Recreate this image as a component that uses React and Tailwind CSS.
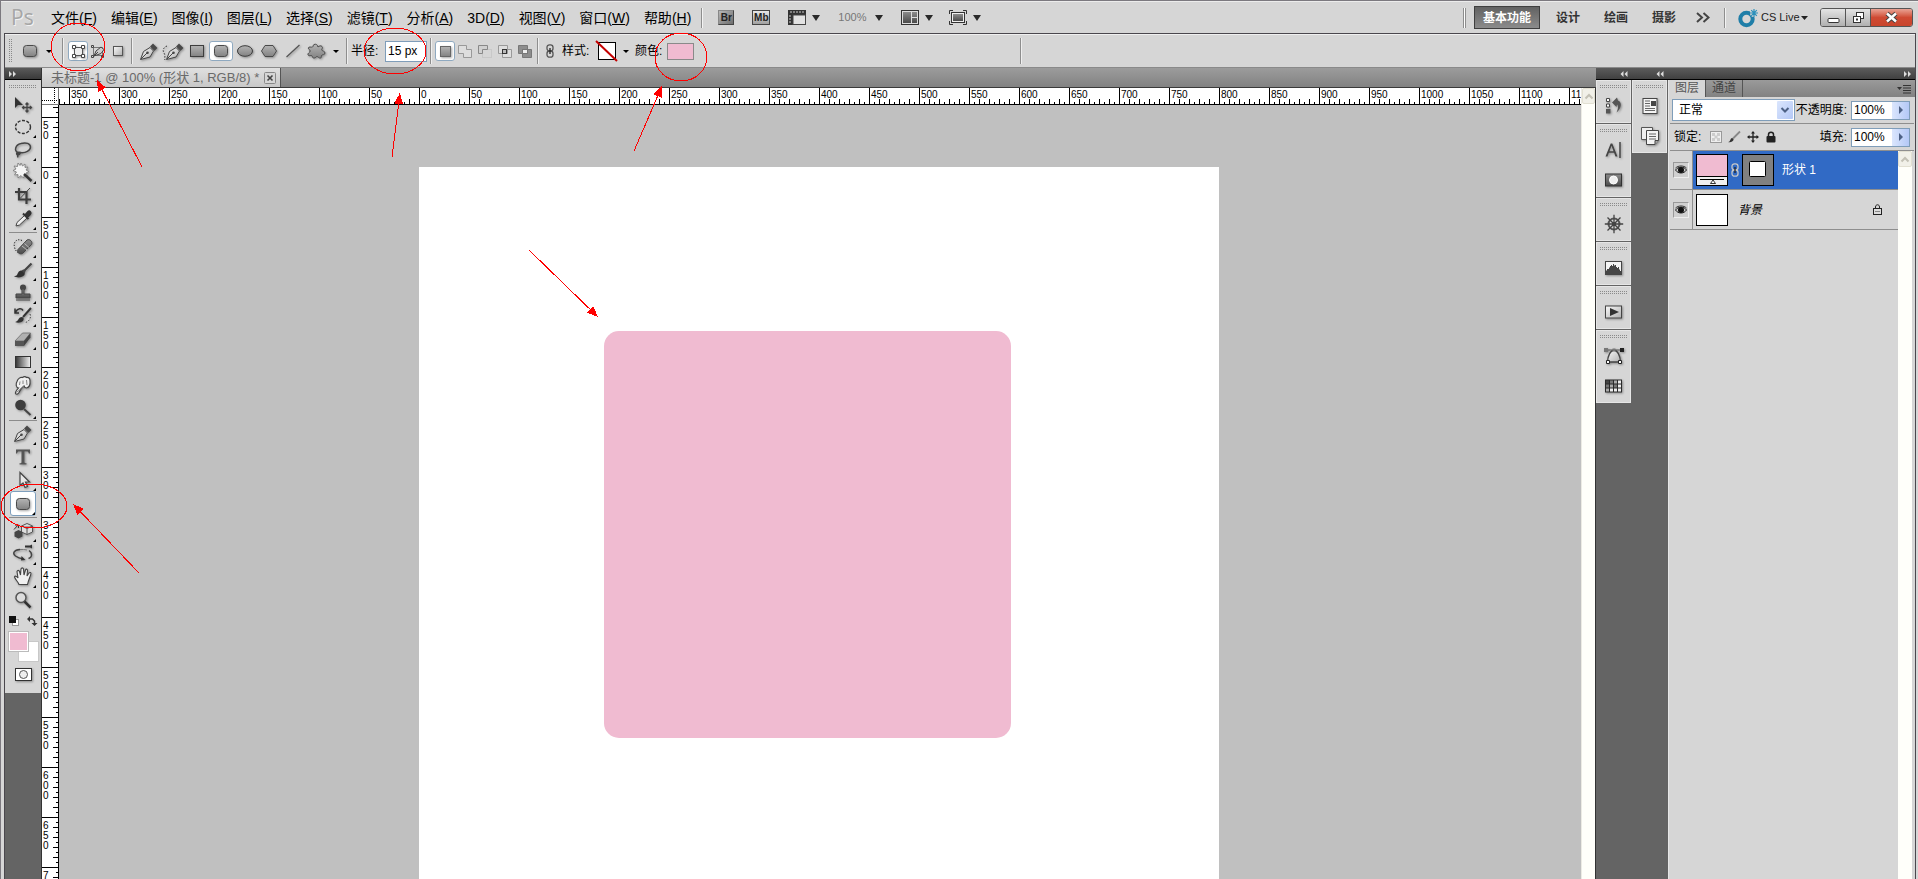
import React, { useEffect, useState } from "react";

const INK = "#4a4a4a";

function Defs() {
  return (
    <svg className="absolute h-0 w-0" aria-hidden="true">
      <defs>
        <linearGradient id="metal" x1="0" y1="0" x2="0" y2="1">
          <stop offset="0" stopColor="#b4b4b4" />
          <stop offset="1" stopColor="#828282" />
        </linearGradient>
        <linearGradient id="dark" x1="0" y1="0" x2="0" y2="1">
          <stop offset="0" stopColor="#8c8c8c" />
          <stop offset="1" stopColor="#4a4a4a" />
        </linearGradient>
        <linearGradient id="pale" x1="0" y1="0" x2="1" y2="1">
          <stop offset="0" stopColor="#fafafa" />
          <stop offset="1" stopColor="#b0b0b0" />
        </linearGradient>
        <linearGradient id="fade" x1="0" y1="0" x2="1" y2="0">
          <stop offset="0" stopColor="#333" />
          <stop offset="1" stopColor="#f4f4f4" />
        </linearGradient>
        <pattern id="dots" width="2" height="2" patternUnits="userSpaceOnUse">
          <path d="M0 0h1v1H0z" fill="#8a8a8a" />
        </pattern>
        <filter id="soft" x="-30%" y="-30%" width="170%" height="170%">
          <feDropShadow dx="1" dy="1" stdDeviation="1" floodColor="#000" floodOpacity="0.35" />
        </filter>
      </defs>
    </svg>
  );
}

function Svg({ w = 20, h = 20, soft, children }) {
  return (
    <svg width={w} height={h} viewBox={`0 0 ${w} ${h}`} fill="none" className="block shrink-0 overflow-visible" aria-hidden="true">
      {soft ? <g filter="url(#soft)">{children}</g> : children}
    </svg>
  );
}

const Caret = ({ big }) =>
  big ? (
    <Svg w={8} h={6}><path d="M0 0h8L4 6z" fill="#2a2a2a" /></Svg>
  ) : (
    <Svg w={6} h={3}><path d="M0 0h6L3 3z" fill="#000" /></Svg>
  );

/* ---------- shared glyphs ---------- */
const RoundRect = () => (
  <Svg w={16} h={14} soft><rect x="1.5" y="1.5" width="13" height="11" rx="3" fill="url(#metal)" stroke={INK} /></Svg>
);
const PenNib = ({ fill = "url(#pale)" }) => (
  <g>
    <path d="M1.5 17.5 4.5 9.5 11 5.5 14.5 9 11 15z" fill={fill} stroke="#444" />
    <path d="M2 17 8 11" stroke="#444" />
    <circle cx="8.5" cy="10.8" r="1.3" fill="#444" />
    <path d="M11 4.5 14 1.5 18.5 6 15.5 9z" fill="#4a4a4a" />
  </g>
);
const Pen = () => <Svg w={20} h={19} soft><PenNib /></Svg>;

/* ---------- toolbox ---------- */
const tools = {
  move: <Svg soft><path d="M2 3v11l3-3h5z" fill="#333" /><path d="M14 9v9M9.500 13.500h9M12.500 10.500 14 9l1.500 1.500M12.500 16.500 14 18l1.500-1.500M11 12l-1.500 1.500L11 15M17 12l1.500 1.500L17 15" stroke="#444" strokeWidth="1.300" /></Svg>,
  marquee: <Svg><ellipse cx="10" cy="10" rx="7.500" ry="6.500" stroke="#333" strokeWidth="1.400" strokeDasharray="3 1.500" /></Svg>,
  lasso: <Svg soft><path d="M5 12.500C1 11 2 5 8 3.500c5-1.500 9.500 0 9.500 3.500s-5 6.500-10 5.500c-3-.6-4.500.5-3.500 2s4-1 3-2c-1.500-.5-3 3-2 5" stroke="#444" strokeWidth="1.500" /></Svg>,
  wand: <Svg soft><path d="m8 0 1.500 3L12 1l0 3.500L15 4l-2 3 3 1.500-3 1.500 1.500 3-3-1L10.500 15 8 12.500 5 15l0-3.500L1.500 12l2-3L0 7.500 3 6 1 3l3.500.5L5 0l2 2.500z" fill="#f4f4f4" stroke="#777" strokeWidth=".8" /><path d="m11 11 7.500 7" stroke="#333" strokeWidth="2.500" /></Svg>,
  crop: <Svg soft><path d="M6 2v11.500h12M2 6h11.500v12" stroke="#3c3c3c" strokeWidth="2.200" /><path d="M7 12.500 17 2" stroke="#444" /></Svg>,
  dropper: <Svg soft><path d="m3 17 1-3.500 7.500-7 2.500 2.500-7.500 7z" fill="#eee" stroke="#444" /><path d="m10 4.500 5.500 5.500M12.500 6l2.500-3c1.500-1.500 3.500.5 2.200 2.200L14.500 8z" stroke="#333" strokeWidth="2" fill="#333" /></Svg>,
  heal: <Svg soft><path d="M9 3.500C4 1 0 5 1.500 10c.5 3 2 4.500 4 6" stroke="#222" strokeDasharray="1.200 1.500" /><path d="m5 12.500 9-9.500c3-1.500 6 2 4.500 4.500l-9 9c-3 1.500-6-1.500-4.500-4z" fill="url(#dark)" stroke="#444" /><path d="m9 9 5 4M11.500 6.500l4.500 4" stroke="#ccc" strokeWidth=".8" /></Svg>,
  brush: <Svg soft><path d="M1 16c3 .5 3-1.500 4.500-4 1.500-2 4-2 5.500-.5s1 4-1.500 5S3.500 18 1 16z" fill="#333" /><path d="m11 11 7.500-7.500M9.500 10l2.500 2.500" stroke="#444" strokeWidth="2.200" /></Svg>,
  stamp: <Svg soft><circle cx="10" cy="4.500" r="3" fill="#444" /><path d="M9 6h2v5h6v4H3v-4h6z" fill="url(#dark)" stroke="#444" /><path d="M3 17h14" stroke="#444" /></Svg>,
  history: <Svg soft><path d="M2.500 6C5 2 8.500 2 10 4.500M2 2.500V7h4" stroke="#333" strokeWidth="1.500" /><path d="M2 16c3-.5 3-3 5-4.500s4.500 0 3.500 2.500S5 17.500 2 16z" fill="#333" /><path d="m10 11 8-9" stroke="#333" strokeWidth="2" /><path d="M17 8c1.500 4-1 7.500-4.500 8.500" stroke="#444" strokeDasharray="1.500 1.500" /></Svg>,
  eraser: <Svg soft><path d="M2 12 9.500 4h8L11 12z" fill="#b0b0b0" stroke="#666" strokeWidth=".7" /><path d="M2 12h9v5H2z" fill="#555" /><path d="m11 12 6.500-8v4.500L11 17z" fill="#444" /></Svg>,
  gradient: <Svg><rect x="2.500" y="4.500" width="15" height="11" fill="url(#fade)" stroke="#333" /></Svg>,
  smudge: <Svg soft><path d="M2.500 18.500c-.5-1.500 1-3 3-5.500C3 12.500 2.500 9 4 6.500 5 3.500 7.500 2 9.500 2.500c1.500-1 3-1 4 0 2-.5 3.500 1 3.500 3 .5 4-1 7-3.500 7.500-1.500 0-2.200-1-2.500-2-2 1.500-4 4-5 6.500-1 1.800-2.800 2.200-3.500 1z" fill="#f0f0f0" stroke="#444" strokeWidth="1.200" /><path d="M7 6.500 6.500 10M10 5.500v3.500M13.500 5l.5 5M3.500 17.500 11 11" stroke="#777" strokeWidth=".9" /></Svg>,
  dodge: <Svg soft><circle cx="7.500" cy="7" r="5.300" fill="#3c3c3c" /><path d="m11 11 6.500 6" stroke="#444" strokeWidth="2" /></Svg>,
  pen: <Pen />,
  type: <Svg soft><path d="M3 2.500h14v4h-1.200c-.3-1.500-.8-2-2-2H11.500V15c0 1 .5 1.300 2 1.300v1.200h-7v-1.200c1.500 0 2-.3 2-1.300V4.500H6.200c-1.200 0-1.700.5-2 2H3z" fill="#555" /></Svg>,
  select: <Svg soft><path d="M7 2.500v13l3-2.500 2 4.500 2.500-1-2-4.500h4z" fill="#e8e8e8" stroke="#444" strokeWidth="1.200" /></Svg>,
  shape: <RoundRect />,
  object3d: <Svg soft><path d="m14 2.500 5.500 2.500v6L14 13.500 8.500 11V5zM8.500 5l5.500 2.500L19.500 5M14 7.500v6" fill="#ddd" stroke="#555" /><path d="m5.500 9 4 2v4.500l-4 2-4-2V11z" fill="#444" /><path d="M1 8.500 5 4M2 4h3.500v3" stroke="#333" /></Svg>,
  camera3d: <Svg soft><path d="M16 6.500c4 3 3 7-.5 8M7 5.500C1 6-1 9 2.500 12c2 1.500 5 2.500 8 3" stroke="#444" strokeWidth="1.500" /><path d="m8 16.500 4.500-.5-4-4zM12 1.500h5l2-1v4l-2-1h-5z" fill="#333" /><path d="M7 5.500c2-.2 5 0 7 .5" stroke="#777" /></Svg>,
  hand: <Svg soft><path d="M6 17.500c-1-3-3.500-4.500-4.500-7.500.5-1.500 2-1 3.500 1L4 4.500c.5-1.500 2-1.500 2.500 0L7.500 8 8 2c.5-1.500 2-1.500 2.500 0l.5 6 1.500-5c.5-1.500 2-1 2 .5L14 9l2-3c1-1 2-.5 2 .7-1 4-2.500 6-3.500 10.800z" fill="#f0f0f0" stroke="#444" strokeWidth="1.100" /></Svg>,
  zoom: <Svg soft><circle cx="8" cy="7.500" r="5" fill="#ddd" stroke="#555" strokeWidth="1.500" /><path d="m11.500 11.500 6 6" stroke="#333" strokeWidth="2.500" /></Svg>,
};

const toolGroups = [
  [["move", "移动"], ["marquee", "选框"], ["lasso", "套索"], ["wand", "魔棒"], ["crop", "裁剪"], ["dropper", "吸管"]],
  [["heal", "修复"], ["brush", "画笔"], ["stamp", "图章"], ["history", "历史画笔"], ["eraser", "橡皮擦"], ["gradient", "渐变"], ["smudge", "涂抹"], ["dodge", "减淡"]],
  [["pen", "钢笔"], ["type", "文字"], ["select", "路径选择"], ["shape", "圆角矩形"]],
  [["object3d", "3D 对象"], ["camera3d", "3D 相机"], ["hand", "抓手"], ["zoom", "缩放"]],
];

const DotGrip = () => <Svg w={28} h={3}><path d="M0 0h28v3H0z" fill="url(#dots)" /></Svg>;

function Toolbox() {
  return (
    <aside className="flex w-9 shrink-0 flex-col bg-[#646464]" aria-label="工具">
      <div className="flex h-3 shrink-0 items-center border-b border-black bg-gradient-to-b from-[#5a5a5a] to-[#3a3a3a] pl-1">
        <Svg w={8} h={6}><path d="M0 0v6l3-3zM4 0v6l3-3z" fill="#ddd" /></Svg>
      </div>
      <div className="flex flex-col items-center bg-[#d6d6d6] pb-3">
        <div className="flex h-3 shrink-0 items-center"><DotGrip /></div>
        {toolGroups.map((group, g) => (
          <div key={g} className="flex flex-col items-center">
            {g > 0 && <span className={`block h-px w-7 bg-[#8c8c8c] ${g === 1 ? "my-[2px]" : "my-px"}`} />}
            {group.map(([id, label]) => (
              <button key={id} type="button" aria-label={label} className={`relative flex w-[26px] items-center justify-center ${id === "shape" ? "h-[25px] rounded-[3px] border border-[#7e9fbd] bg-white" : "h-[23px]"}`}>
                {tools[id]}
                {id !== "move" && id !== "zoom" && (
                  <span className="absolute right-0 bottom-0"><Svg w={3} h={3}><path d="M3 0v3H0z" fill="#000" /></Svg></span>
                )}
              </button>
            ))}
          </div>
        ))}
        <div className="flex h-5 w-full items-center justify-between px-1">
          <button type="button" aria-label="默认颜色"><Svg w={10} h={10}><rect x="3.500" y="3.500" width="6" height="6" fill="#fff" stroke="#999" /><path d="M0 0h7v7H0z" fill="#111" /></Svg></button>
          <button type="button" aria-label="切换颜色"><Svg w={10} h={10}><path d="M2 3h3.500L7.500 5v3" stroke="#333" strokeWidth="1.500" /><path d="M3 0v6L0 3zM4.500 7h6l-3 3z" fill="#333" /></Svg></button>
        </div>
        <div className="relative h-[31px] w-[31px]">
          <button type="button" aria-label="背景色" className="absolute right-0 bottom-0 h-[21px] w-[21px] border border-[#c8c8c8] bg-white" />
          <button type="button" aria-label="前景色" className="absolute top-0 left-0 h-[21px] w-[21px] border border-[#bbb] bg-[#f0bbd1] shadow-[inset_0_0_0_1px_#fff]" />
        </div>
        <button type="button" aria-label="快速蒙版" className="mt-[6px]">
          <Svg w={17} h={13} soft><rect x=".5" y=".5" width="16" height="12" fill="#fff" stroke="#333" /><circle cx="8.500" cy="6.500" r="4" fill="#eee" stroke="#555" /></Svg>
        </button>
      </div>
    </aside>
  );
}

/* ---------- menu bar ---------- */
const menus = [["文件", "F"], ["编辑", "E"], ["图像", "I"], ["图层", "L"], ["选择", "S"], ["滤镜", "T"], ["分析", "A"], ["3D", "D"], ["视图", "V"], ["窗口", "W"], ["帮助", "H"]];

function WinButton({ label, className, children }) {
  return (
    <button type="button" aria-label={label} className={`flex h-[17px] items-center justify-center ${className}`}>
      {children}
    </button>
  );
}

function MenuBar() {
  return (
    <header className="flex h-8 shrink-0 items-center border-t border-[#ececec] bg-[#d6d6d6] pr-[5px] pl-[10px]">
      <span className="w-10 shrink-0 font-['Open_Sans','Liberation_Sans',sans-serif] text-[21px] leading-none text-[#a6a6a6] [text-shadow:1px_1px_0_#f2f2f2]">Ps</span>
      <nav className="flex shrink-0 gap-[14px]">
        {menus.map(([name, key]) => (
          <button key={key} type="button" className="text-[14px] leading-5 whitespace-nowrap">
            {name}(<span className="underline">{key}</span>)
          </button>
        ))}
      </nav>
      <span className="ml-[10px] h-5 w-[2px] shrink-0 border-l border-[#8e8e8e] bg-white/70" />
      <div className="ml-[15px] flex shrink-0 items-center">
        <button type="button" className="flex h-[15px] w-4 items-center justify-center border border-t-[#888] border-l-[#888] border-[#444] bg-gradient-to-br from-[#b8b8b8] to-[#6e6e6e] text-[10px] leading-none font-bold text-[#222]">Br</button>
        <button type="button" className="ml-[18px] flex h-[15px] w-[18px] items-center justify-center border border-[#444] bg-gradient-to-b from-[#e8e8e8] to-[#a0a0a0] text-[10px] leading-none font-bold text-[#222]">Mb</button>
        <button type="button" aria-label="查看额外内容" className="ml-[18px] flex w-8 items-center justify-between">
          <Svg w={18} h={15}><path d="M0 0h18v5H5v10H0z" fill="#333" /><rect x="5" y="5" width="12.500" height="9.500" fill="#e2e2e2" stroke="#444" /><path d="M3 1v2M6 1v2M9 1v2M12 1v2M15 1v2M1 6h2M1 9h2M1 12h2" stroke="#ccc" /></Svg>
          <Caret big />
        </button>
        <button type="button" aria-label="缩放级别" className="ml-[18px] flex w-[45px] items-center justify-between text-[11px] text-[#777]">
          100%<Caret big />
        </button>
        <button type="button" aria-label="排列文档" className="ml-[18px] flex w-8 items-center justify-between">
          <Svg w={18} h={15}><rect x=".5" y=".5" width="17" height="14" fill="#ddd" stroke="#333" /><path d="M2 2h8v11H2zM11 2h5v5h-5zM11 8h5v5h-5z" fill="url(#dark)" /></Svg>
          <Caret big />
        </button>
        <button type="button" aria-label="屏幕模式" className="ml-4 flex w-8 items-center justify-between">
          <Svg w={18} h={15}><path d="M.5 4V.5H4M14 .5h3.500V4M17.500 11v3.500H14M4 14.500H.5V11" stroke="#333" /><rect x="2.500" y="2.500" width="13" height="10" fill="#eee" stroke="#333" /><path d="M4 4h10v7H4z" fill="url(#dark)" /></Svg>
          <Caret big />
        </button>
      </div>
      <div className="ml-auto flex shrink-0 items-center text-[12px] font-bold">
        <span className="mr-2 h-5 w-[3px] border-x border-[#8e8e8e] bg-white" />
        <button type="button" className="h-[23px] w-[66px] border border-[#3f3f3f] bg-gradient-to-b from-[#626262] to-[#8c8c8c] text-white">基本功能</button>
        <button type="button" className="ml-4 text-[#333]">设计</button>
        <button type="button" className="ml-6 text-[#333]">绘画</button>
        <button type="button" className="ml-6 text-[#333]">摄影</button>
        <button type="button" aria-label="更多工作区" className="ml-5"><Svg w={14} h={11}><path d="m1 1 5 4.500-5 4.500M7.500 1l5 4.500-5 4.500" stroke="#444" strokeWidth="2" /></Svg></button>
        <span className="ml-[14px] h-5 w-[2px] border-l border-[#8e8e8e] bg-white/70" />
        <button type="button" className="ml-3 flex items-center text-[11px] font-normal text-[#222]">
          <Svg w={20} h={18}><circle cx="8.500" cy="10" r="6.200" stroke="#1f7ea8" strokeWidth="4" /><circle cx="16" cy="4" r="4" fill="#d6d6d6" /><path d="M16 0v8M12 4h8M13.200 1.200l5.600 5.600M18.800 1.200l-5.600 5.600" stroke="#2b90bb" strokeWidth="1.200" /></Svg>
          <span className="ml-[3px] w-10 text-left whitespace-nowrap">CS Live</span>
          <Svg w={7} h={4}><path d="M0 0h7L3.500 4z" fill="#222" /></Svg>
        </button>
        <div className="ml-3 flex overflow-hidden rounded-[3px] border border-[#555]">
          <WinButton label="最小化" className="w-[25px] border-r border-[#555] bg-gradient-to-b from-[#e4e4e4] to-[#b0b0b0]">
            <Svg w={13} h={13}><rect x="1" y="7.500" width="11" height="4" rx="1" fill="#fff" stroke="#333" /></Svg>
          </WinButton>
          <WinButton label="还原" className="w-[25px] border-r border-[#555] bg-gradient-to-b from-[#e4e4e4] to-[#b0b0b0]">
            <Svg w={13} h={13}><rect x="4.500" y="1.500" width="7" height="6" fill="#fff" stroke="#333" /><rect x="1.500" y="5.500" width="7" height="6" fill="#fff" stroke="#333" /><path d="M4 8.500h2" stroke="#333" strokeWidth="2" /></Svg>
          </WinButton>
          <WinButton label="关闭" className="w-[41px] bg-gradient-to-b from-[#e8a294] via-[#cf4a33] to-[#c8452c]">
            <Svg w={13} h={11}><path d="m2 1.500 9 8M11 1.500l-9 8" stroke="#444" strokeWidth="4.500" /><path d="m2 1.500 9 8M11 1.500l-9 8" stroke="#fff" strokeWidth="2.500" /></Svg>
          </WinButton>
        </div>
      </div>
    </header>
  );
}

/* ---------- options bar ---------- */
const Sep = ({ className = "" }) => <span className={`h-[26px] w-[2px] shrink-0 border-l border-[#8e8e8e] bg-white/60 ${className}`} />;

function Slot({ label, wide, on, children }) {
  return (
    <button type="button" aria-label={label} className={`flex h-5 shrink-0 items-center justify-center ${wide ? "w-6" : "w-5"} ${on ? "rounded-[3px] border border-[#8fa9c0] bg-white" : ""}`}>
      {children}
    </button>
  );
}

const shapeSlots = [
  ["钢笔", <Pen />],
  ["自由钢笔", <Svg w={22} h={19} soft><g transform="translate(3 0)"><PenNib /></g><path d="M5 4C2 5 0 8 2 11s0 5 1 7" stroke="#333" strokeDasharray="1.500 1.500" /></Svg>],
  ["矩形", <Svg w={16} h={14} soft><rect x="1.500" y="1.500" width="13" height="11" fill="url(#metal)" stroke="#3c3c3c" /></Svg>],
  ["圆角矩形", <RoundRect />],
  ["椭圆", <Svg w={18} h={14} soft><ellipse cx="9" cy="7" rx="7.500" ry="5.300" fill="url(#metal)" stroke="#3c3c3c" /></Svg>],
  ["多边形", <Svg w={18} h={14} soft><path d="M5 1.500h8L16.500 7 13 12.500H5L1.500 7z" fill="url(#metal)" stroke={INK} /></Svg>],
  ["直线", <Svg w={16} h={14} soft><path d="M1.500 13 14.500 1" stroke="#555" strokeWidth="1.300" /></Svg>],
  ["自定形状", <Svg w={20} h={16} soft><path d="M7 1.500c2-.8 3.500.2 4 2.500 1-1 3-1.800 4-.5 1.200 1.500-.5 2.500-.3 3.500.3 1.200 3.300.8 3.300 3s-3 1.500-3.500 2.500.5 2-1 2.500-2.500-1.500-3.500-1.500-1.500 2-3.500 1.500c-1.500-.4-1-2-1.800-2.400-1-.4-3 1-3.700-.8-.6-1.600 2-2.300 2.200-3.800C3.300 6.500 1 6.500 1.300 4.900c.4-1.600 3.200-.4 4.200-.9S5.800 2 7 1.500z" fill="url(#metal)" stroke={INK} /></Svg>],
];

const combineSlots = [
  ["新建形状图层", <Svg w={12} h={12} soft><rect x="1.500" y="1.500" width="10" height="10" fill="url(#metal)" stroke="#666" /></Svg>],
  ["添加到形状区域", <Svg w={14} h={13}><path d="M.5 .5h8v4h5v8h-8v-4h-5z" fill="#dedede" stroke="#999" /></Svg>],
  ["从形状区域减去", <Svg w={14} h={13}><path d="M4.500 4.500h9v8h-9z" stroke="#bbb" strokeDasharray="1 1" /><path d="M.5 .5h9v4h-5v4h-4z" fill="#d0d0d0" stroke="#888" /></Svg>],
  ["交叉形状区域", <Svg w={14} h={13}><path d="M.5 .5h9v8h-9zM4.500 4.500h9v8h-9z" fill="#dedede" stroke="#999" /><rect x="4.500" y="4.500" width="4" height="4" fill="#bbb" stroke="#333" /></Svg>],
  ["重叠形状区域除外", <Svg w={14} h={13}><path d="M.5 .5h9v8h-9zM4.500 4.500h9v8h-9z" fill="#8d8d8d" stroke="#777" /><rect x="4.500" y="4.500" width="5" height="4" fill="#eee" stroke="#777" /></Svg>],
];

const ChainGlyph = ({ color = "#555", bar = "#222" }) => (
  <Svg w={8} h={14}><rect x="1" y=".8" width="6" height="6.200" rx="2.500" stroke={color} strokeWidth="1.300" /><rect x="1" y="7" width="6" height="6.200" rx="2.500" stroke={color} strokeWidth="1.300" /><path d="M4 4v6" stroke={bar} strokeWidth="1.300" /></Svg>
);

function OptionsBar() {
  return (
    <div className="flex h-[34px] shrink-0 items-center border-t border-b border-t-[#f0f0f0] border-b-[#8a8a8a] bg-[#d6d6d6] pl-1 text-[12px]">
      <Svg w={3} h={24}><path d="M0 0h3v24H0z" fill="url(#dots)" /></Svg>
      <button type="button" aria-label="工具预设" className="ml-2 flex w-8 shrink-0 items-center justify-between pl-[2px]"><RoundRect /><Caret /></button>
      <Sep className="ml-[10px]" />
      <div className="ml-1 flex shrink-0">
        <Slot label="形状图层" on>
          <Svg w={13} h={13} soft><path d="M2.500 2.500h8v8h-8z" fill="#eee" stroke="#555" /><path d="M.5 .5h3v3h-3zM9.500 .5h3v3h-3zM.5 9.500h3v3h-3zM9.500 9.500h3v3h-3z" fill="#fff" stroke="#444" /></Svg>
        </Slot>
        <Slot label="路径">
          <Svg w={14} h={13}><path d="M2.500 2.500h9v8h-9z" stroke="#777" /><path d="M.5 .5h2v2h-2zM.5 10.500h2v2h-2zM10.500 10.500h2v2h-2z" fill="#ddd" stroke="#444" /><path d="m3 11 2-5 5-4 3 2.500-3 4z" fill="#ccc" stroke="#444" /><path d="m3 11 4-4" stroke="#444" /></Svg>
        </Slot>
        <Slot label="填充像素">
          <Svg w={12} h={12} soft><rect x="1.500" y="1.500" width="9" height="9" fill="url(#pale)" stroke="#555" /></Svg>
        </Slot>
      </div>
      <Sep className="ml-[3px]" />
      <div className="ml-1 flex shrink-0">
        {shapeSlots.map(([label, glyph]) => (
          <Slot key={label} label={label} wide on={label === "圆角矩形"}>{glyph}</Slot>
        ))}
      </div>
      <button type="button" aria-label="几何选项" className="ml-1 flex h-5 w-2 shrink-0 items-center"><Caret /></button>
      <Sep className="ml-[5px]" />
      <label htmlFor="radius" className="ml-[3px] w-[34px] shrink-0 whitespace-nowrap">半径:</label>
      <input id="radius" defaultValue="15 px" className="h-[21px] w-[42px] shrink-0 border border-[#7f9db9] bg-white px-[2px] text-[12px]" />
      <Sep className="ml-[3px]" />
      <div className="ml-[3px] flex shrink-0">
        {combineSlots.map(([label, glyph], i) => (
          <Slot key={label} label={label} on={i === 0}>{glyph}</Slot>
        ))}
      </div>
      <Sep className="ml-[2px]" />
      <button type="button" aria-label="链接" className="ml-[7px]"><ChainGlyph /></button>
      <span className="ml-2 w-9 shrink-0 whitespace-nowrap">样式:</span>
      <button type="button" aria-label="样式" className="flex shrink-0 items-center gap-[7px]">
        <Svg w={18} h={18}><rect x=".5" y=".5" width="17" height="17" fill="#fff" stroke="#000" /><path d="m-2-1 21 20" stroke="#c40000" strokeWidth="2" /></Svg>
        <Caret />
      </button>
      <span className="ml-[6px] w-8 shrink-0 whitespace-nowrap">颜色:</span>
      <button type="button" aria-label="颜色" className="h-[17px] w-[27px] shrink-0 border border-[#8a8a8a] bg-[#f0bbd1]" />
      <Sep className="ml-[326px]" />
    </div>
  );
}

/* ---------- rulers ---------- */
const range = (from, to) => {
  const out = [];
  for (let v = from; v < to; v += 50) out.push(v);
  return out;
};
const steps = [5, 10, 15, 20, 25, 30, 35, 40, 45];

function useWindowSize() {
  const read = () => [window.innerWidth, window.innerHeight];
  const [size, setSize] = useState(read);
  useEffect(() => {
    const onResize = () => setSize(read());
    window.addEventListener("resize", onResize);
    return () => window.removeEventListener("resize", onResize);
  }, []);
  return size;
}

function HRuler({ end }) {
  return (
    <div className="flex h-[17px] min-w-0 flex-1 overflow-hidden border-b border-black bg-white">
      <div className="-ml-[40px] flex">
        {range(-400, end).map((v, i) => (
          <div key={v} className="relative h-4 w-[50px] shrink-0 border-l border-black pt-[2px] pl-px text-[10px] leading-[10px]">
            {i > 0 && Math.abs(v)}
            <span className="absolute bottom-0 -left-px">
              <Svg w={50} h={5}>{steps.map((s) => <path key={s} d={s % 10 ? `M${s} 3h1v2h-1z` : `M${s} 0h1v5h-1z`} fill="#000" />)}</Svg>
            </span>
          </div>
        ))}
      </div>
    </div>
  );
}

function VRuler({ end }) {
  return (
    <div className="w-[17px] shrink-0 overflow-hidden border-r border-black bg-white">
      <div className="-mt-[38px]">
        {range(-100, end).map((v, n) => (
          <div key={v} className="relative h-[50px] border-t border-black pt-[3px] pl-px text-[10px] leading-[10px]">
            {n > 0 && String(Math.abs(v)).split("").map((d, i) => <span key={i} className="block">{d}</span>)}
            <span className="absolute -top-px right-0">
              <Svg w={5} h={50}>{steps.map((s) => <path key={s} d={s % 10 ? `M3 ${s}h2v1h-2z` : `M0 ${s}h5v1h-5z`} fill="#000" />)}</Svg>
            </span>
          </div>
        ))}
      </div>
    </div>
  );
}

const ScrollUp = () => (
  <button type="button" aria-label="向上滚动" className="flex h-4 w-full shrink-0 items-center justify-center rounded-[2px] border border-[#e2e0d2] bg-[#f1f0e8]">
    <Svg w={8} h={5}><path d="m.5 4.500 3.500-3.500 3.500 3.500" stroke="#c3c1b5" strokeWidth="2" /></Svg>
  </button>
);

function Workspace() {
  const [width, height] = useWindowSize();
  return (
    <main className="flex min-w-0 flex-1 flex-col border-l border-[#333]">
      <div className="flex h-5 shrink-0 border-b border-[#3a3a3a] bg-gradient-to-b from-[#9c9c9c] to-[#828282]">
        <div className="flex h-[19px] w-[239px] items-center border-r border-[#555] bg-gradient-to-b from-[#e0e0e0] to-[#c8c8c8] pl-[9px] text-[13px] whitespace-nowrap text-[#6a6a6a]">
          <span>未标题-1 @ 100% (形状 1, RGB/8) *</span>
          <button type="button" aria-label="关闭文档" className="mr-1 ml-auto"><Svg w={12} h={12}><rect x=".5" y=".5" width="11" height="11" rx="1" fill="#d6d6d6" stroke="#888" /><path d="m3.500 3.500 5 5M8.500 3.500l-5 5" stroke="#444" strokeWidth="1.600" /></Svg></button>
        </div>
      </div>
      <div className="flex min-h-0 flex-1">
        <div className="flex min-w-0 flex-1 flex-col">
          <div className="flex shrink-0">
            <div className="h-[17px] w-[17px] shrink-0 border-r border-b border-[#777] bg-white">
              <Svg w={16} h={16}><path d="M12.500 0v16M0 12.500h16" stroke="#000" strokeDasharray="1 1" /></Svg>
            </div>
            <HRuler end={width - 756} />
          </div>
          <div className="flex min-h-0 flex-1">
            <VRuler end={height - 167} />
            <div className="flex min-w-0 flex-1 overflow-hidden bg-[#c0c0c0] pt-[62px] pl-[360px]">
              <div className="w-[800px] shrink-0 bg-white pt-[164px] pl-[185px]">
                <div className="h-[407px] w-[407px] rounded-[15px] bg-[#f0bbd1]" />
              </div>
            </div>
          </div>
        </div>
        <div className="w-[15px] shrink-0 border-r border-l border-r-[#333] border-l-[#ecebe4] bg-[#fffffa]"><ScrollUp /></div>
      </div>
    </main>
  );
}

/* ---------- dock ---------- */
const dock = {
  history: <Svg soft><path d="M2.500 2.500h3v3h-3zM2.500 8h3v3h-3z" fill="#fff" stroke="#444" /><path d="M2 13h4.500v4.500H2z" fill="#555" /><path d="m8 6.500 5-5 1 3c4.500 1.500 3.500 8.500-1.500 12 2-4.500 1.800-7 .5-8l-.5 2.500z" fill="#555" /></Svg>,
  character: <Svg soft><path d="M1.500 16.500 6.700 3.500h1.600l5.200 13h-2l-1.400-3.700H4.900l-1.400 3.700zM5.500 11.200h4L7.500 5.700z" fill="#444" /><path d="M16 2v16" stroke="#333" strokeWidth="1.300" /></Svg>,
  mask: <Svg soft><rect x="1.500" y="4" width="16" height="12" fill="url(#dark)" stroke="#333" /><circle cx="9.500" cy="10" r="4" fill="#eee" stroke="#fff" /></Svg>,
  wheel: <Svg><circle cx="10" cy="10" r="5.500" stroke="#555" strokeWidth="2" /><circle cx="10" cy="10" r="2" fill="#333" /><path d="M10 .8v18.400M.8 10h18.400M3.500 3.500l13 13M16.500 3.500l-13 13" stroke="#444" strokeWidth="1.300" /></Svg>,
  histogram: <Svg soft><rect x="1.500" y="3.500" width="16" height="13" fill="#f4f4f4" stroke="#444" /><path d="M2 16v-3l1-1v-1h2V9.500h1V8h1V7h1v1h1V6h1v2l1-1h1v2h1v1h1V9h1v2l1 1v1h1v3z" fill="#444" /></Svg>,
  play: <Svg soft><rect x="1.500" y="4" width="16" height="12" fill="url(#pale)" stroke="#444" /><path d="m6 6 9 4-9 4z" fill="#333" /></Svg>,
  paths: <Svg soft><path d="M3.500 16C4 9 6 5 10 4c4 1 6 5 6.500 12z" fill="url(#pale)" stroke="#444" strokeWidth="1.300" /><path d="M1 4h18" stroke="#555" /><path d="M0 2h4v4H0zM8.500 2.500h3v3h-3z" fill="#777" /><path d="M16 2h4v4h-4z" fill="#222" /><path d="M2.500 14.500h3v3h-3zM14.500 14.500h3v3h-3z" fill="#fff" stroke="#222" /></Svg>,
  swatches: <Svg soft><path d="M1 3.500h17v13H1z" fill="#2c2c2c" /><path d="M2 4.500h3v3H2z" fill="#444" /><path d="M6 4.500h3v3H6zM2 8.500h3v3H2zM10 8.500h3v3h-3z" fill="#777" /><path d="M10 4.500h3v3h-3zM6 8.500h3v3H6zM2 12.500h3v3H2z" fill="#aaa" /><path d="M14 4.500h3v3h-3zM14 8.500h3v3h-3zM6 12.500h3v3H6zM10 12.500h3v3h-3zM14 12.500h3v3h-3z" fill="#eee" /></Svg>,
  info: <Svg soft><rect x="3" y="2.500" width="14" height="15" fill="#f4f4f4" stroke="#444" /><path d="M5 5h5M5 7.500h5M5 10h5M5 14.500h10M5 12.500h10" stroke="#666" /><path d="M11 5h5v5h-5z" fill="#444" /></Svg>,
  notes: <Svg soft><path d="M1.500 1.500h11v12h-11z" fill="#eee" stroke="#555" /><path d="M6.500 4.500h12v10l-3.500 4H6.500z" fill="#f4f4f4" stroke="#444" /><path d="M9 8h7M9 10.500h7M9 13h7" stroke="#666" /><path d="M15 18.500v-4h3.500" fill="#aaa" stroke="#444" /></Svg>,
};

function DockColumn({ groups }) {
  return (
    <div className="flex w-9 shrink-0 flex-col gap-px pr-px">
      {groups.map((group) => (
        <div key={group[0]} className="flex flex-col items-center border border-[#e6e6e6] bg-[#d6d6d6] pb-px">
          <span className="flex h-[10px] items-center"><DotGrip /></span>
          {group.map((id) => (
            <button key={id} type="button" aria-label={id} className="flex h-[30px] w-[30px] items-center justify-center">{dock[id]}</button>
          ))}
        </div>
      ))}
    </div>
  );
}

const Chevrons = ({ right }) => (
  <Svg w={8} h={6}><path d={right ? "M0 0v6l3-3zM4 0v6l3-3z" : "M3.500 0v6l-3-3zM7.500 0v6l-3-3z"} fill="#ddd" /></Svg>
);

function PercentField({ id, label }) {
  return (
    <div className="ml-auto flex items-center">
      <label htmlFor={id} className="mr-1 whitespace-nowrap">{label}</label>
      <div className="flex h-[19px] w-[59px] border border-[#7f9db9] bg-white">
        <input id={id} defaultValue="100%" className="w-10 min-w-0 pl-[2px] text-[12px]" />
        <button type="button" aria-label="滑块" className="flex flex-1 items-center justify-center bg-gradient-to-r from-[#dbe6fd] to-[#b4c8f6]">
          <Svg w={5} h={8}><path d="m1 0 4 4-4 4z" fill="#4d6185" /></Svg>
        </button>
      </div>
    </div>
  );
}

const Eye = () => (
  <button type="button" aria-label="可见性" className="flex h-4 w-4 items-center justify-center border border-t-[#999] border-l-[#999] border-[#eee] bg-[#d0d0d0]">
    <Svg w={12} h={10}><path d="M.5 5C3 1.500 9 1 11.500 5 9 9 3 9 .5 5z" fill="#ccc" stroke="#222" /><circle cx="6" cy="5" r="3" fill="#111" /><path d="M.5 3C3.500 .3 8.500 .3 11.500 3" stroke="#333" /></Svg>
  </button>
);

function LayersPanel() {
  return (
    <section className="flex w-[247px] shrink-0 flex-col border-l border-[#e6e6e6] bg-[#d6d6d6] text-[12px]" aria-label="图层">
      <div className="flex h-[17px] shrink-0 items-stretch bg-gradient-to-b from-[#9a9a9a] to-[#828282]" role="tablist">
        <button type="button" role="tab" aria-selected="true" className="w-9 bg-[#d6d6d6] leading-[17px] text-[#555]">图层</button>
        <button type="button" role="tab" aria-selected="false" className="w-[38px] border-x border-[#555] leading-[17px] text-[#444]">通道</button>
        <button type="button" aria-label="面板菜单" className="mr-1 ml-auto"><Svg w={14} h={8}><path d="M0 2h5L2.500 5z" fill="#333" /><path d="M6 .5h8M6 3h8M6 5.500h8M6 8h8" stroke="#333" /></Svg></button>
      </div>
      <div className="mx-px flex h-[27px] shrink-0 items-center border-b border-[#8e8e8e] pr-1 pl-[2px]">
        <div className="relative h-[22px] w-[123px]">
          <select aria-label="混合模式" defaultValue="normal" className="h-full w-full appearance-none border border-[#7f9db9] bg-white pl-[6px] text-[12px]">
            <option value="normal">正常</option>
          </select>
          <span className="pointer-events-none absolute top-[2px] right-[2px] flex h-[18px] w-4 items-center justify-center rounded-[1px] bg-gradient-to-br from-[#dbe6fd] to-[#b4c8f6]">
            <Svg w={8} h={6}><path d="m.5 1 3.500 3.500L7.500 1" stroke="#4d6185" strokeWidth="2" /></Svg>
          </span>
        </div>
        <PercentField id="opacity" label="不透明度:" />
      </div>
      <div className="mx-px flex h-[27px] shrink-0 items-center border-b border-[#8e8e8e] pr-1 pl-1">
        <span className="w-9 whitespace-nowrap">锁定:</span>
        <div className="flex items-center gap-[6px]">
          <button type="button" aria-label="锁定透明像素"><Svg w={12} h={12}><rect x=".5" y=".5" width="11" height="11" fill="#eee" stroke="#999" /><path d="M2 2h3v3H2zM7 2h3v3H7zM4.500 4.500h3v3h-3zM2 7h3v3H2zM7 7h3v3H7z" fill="#ccc" /></Svg></button>
          <button type="button" aria-label="锁定图像像素"><Svg w={13} h={12}><path d="M0 11c2 0 2-2 3-3.500s3 0 2.500 1.500S2.500 12 0 11z" fill="#333" /><path d="M5 7.500 12 .5" stroke="#888" strokeWidth="1.800" /></Svg></button>
          <button type="button" aria-label="锁定位置"><Svg w={12} h={12}><path d="M6 1v10M1 6h10" stroke="#222" strokeWidth="1.300" /><path d="m6 0 2 2.500H4zM6 12l2-2.500H4zM0 6l2.500-2v4zM12 6 9.500 4v4z" fill="#222" /></Svg></button>
          <button type="button" aria-label="锁定全部"><Svg w={12} h={12}><path d="M3.500 6V3.500c0-3 5-3 5 0V6" stroke="#222" strokeWidth="1.500" /><rect x="1.500" y="5" width="9" height="6.500" rx="1" fill="#222" /></Svg></button>
        </div>
        <PercentField id="fill" label="填充:" />
      </div>
      <div className="mx-px flex min-h-0 flex-1">
        <ul className="flex-1">
          <li className="flex h-[39px] items-stretch border-b border-[#8e8e8e]">
            <span className="flex w-[23px] items-center border-r border-[#8e8e8e] pl-[3px]"><Eye /></span>
            <div className="flex flex-1 items-center bg-[#316ac5] pl-[3px] text-white">
              <Svg w={32} h={32}><rect x=".5" y=".5" width="31" height="31" fill="#f0bbd1" stroke="#000" /><path d="M1 22.500h30" stroke="#000" /><path d="M1 23h30v8H1z" fill="#f0f0f0" /><path d="M4 25.500h24" stroke="#000" /><path d="m17 26 2.500 3.500h-5z" stroke="#000" strokeWidth=".8" fill="#fff" /></Svg>
              <span className="mx-[3px]"><ChainGlyph color="#c8c8c8" /></span>
              <Svg w={32} h={32}><rect x=".5" y=".5" width="31" height="31" fill="#808080" stroke="#000" /><rect x="7.500" y="7.500" width="16" height="15" rx="1" fill="#fff" stroke="#000" /></Svg>
              <span className="ml-2">形状 1</span>
            </div>
          </li>
          <li className="flex h-10 items-stretch border-b border-[#8e8e8e]">
            <span className="flex w-[23px] items-center border-r border-[#8e8e8e] pl-[3px]"><Eye /></span>
            <div className="flex flex-1 items-center pr-4 pl-[3px]">
              <span className="h-8 w-8 border border-black bg-white" />
              <span className="ml-[10px] italic">背景</span>
              <span className="ml-auto"><Svg w={9} h={11}><path d="M2.500 5V3c0-3 4-3 4 0v2" stroke="#222" /><rect x=".5" y="4.500" width="8" height="6" fill="#ddd" stroke="#222" /><path d="M2 7.500h5" stroke="#888" /></Svg></span>
            </div>
          </li>
        </ul>
        <div className="mr-[2px] w-[14px] shrink-0 bg-[#fffffa]"><ScrollUp /></div>
      </div>
    </section>
  );
}

function Dock() {
  return (
    <div className="flex shrink-0 flex-col bg-[#646464]">
      <div className="flex h-3 shrink-0 items-center border-b border-black bg-gradient-to-b from-[#5c5c5c] to-[#404040] pr-[3px]">
        <span className="flex w-9 justify-end pr-1"><Chevrons /></span>
        <span className="flex w-9 justify-end pr-1"><Chevrons /></span>
        <span className="ml-auto"><Chevrons right /></span>
      </div>
      <div className="flex min-h-0 flex-1">
        <DockColumn groups={[["history"], ["character", "mask"], ["wheel"], ["histogram"], ["play"], ["paths", "swatches"]]} />
        <DockColumn groups={[["info", "notes"]]} />
        <LayersPanel />
      </div>
    </div>
  );
}

/* ---------- red tutorial marks ---------- */
const rings = [[78, 47, 27, 24], [395, 51, 31, 23], [681, 57, 26, 24], [34, 506, 33, 22]];
const arrows = [[142, 167, 97, 80], [392, 157, 400, 93], [634, 151, 662, 86], [529, 250, 598, 317], [139, 573, 73, 504]];

function Marks() {
  return (
    <svg className="pointer-events-none absolute -top-px -left-px" width="720" height="600" fill="none" stroke="#f00" shapeRendering="crispEdges" aria-hidden="true">
      <defs>
        <marker id="tip" markerUnits="userSpaceOnUse" markerWidth="12" markerHeight="10" refX="11" refY="4.500" orient="auto">
          <path d="M0 0 11 4.500 0 9z" fill="#f00" stroke="none" />
        </marker>
      </defs>
      {rings.map(([cx, cy, rx, ry]) => <ellipse key={cx} cx={cx} cy={cy} rx={rx} ry={ry} />)}
      {arrows.map(([x1, y1, x2, y2]) => <line key={x1} x1={x1} y1={y1} x2={x2} y2={y2} markerEnd="url(#tip)" />)}
    </svg>
  );
}

export default function App() {
  return (
    <div className="relative flex h-screen flex-col overflow-hidden border-t border-l border-[#7c797f] bg-[#d6d6d6] font-['Liberation_Sans','Noto_Sans_CJK_SC',sans-serif] text-black">
      <Defs />
      <MenuBar />
      <div className="mr-[2px] ml-[3px] flex min-h-0 flex-1 flex-col border-x border-t border-[#4a474d]">
        <OptionsBar />
        <div className="flex min-h-0 flex-1">
          <Toolbox />
          <Workspace />
          <Dock />
        </div>
      </div>
      <Marks />
    </div>
  );
}
